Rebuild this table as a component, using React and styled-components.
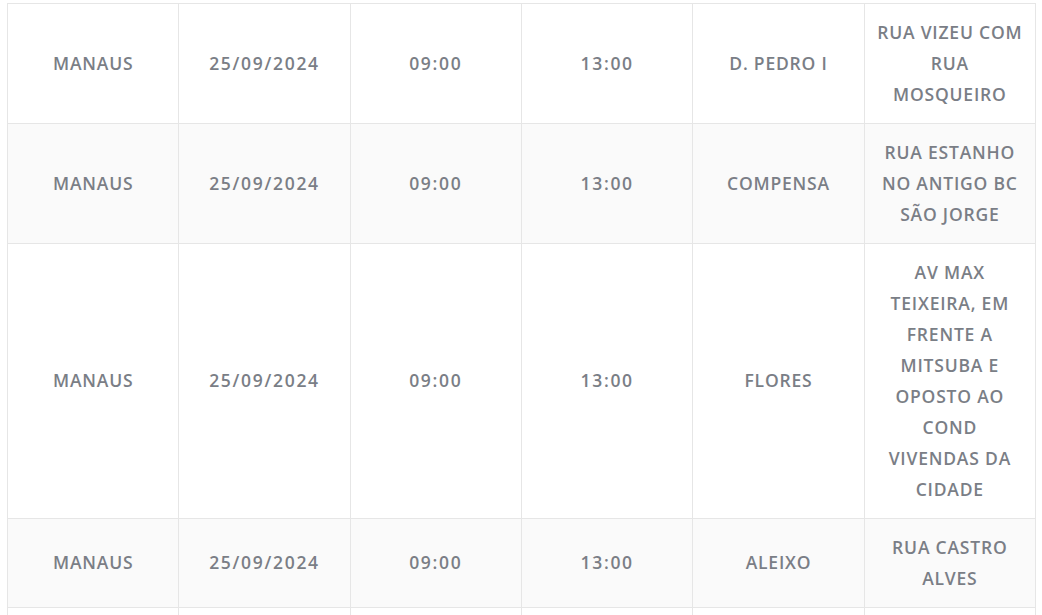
import styled, { createGlobalStyle } from "styled-components";

const GlobalStyle = createGlobalStyle`
  html, body {
    margin: 0;
    padding: 0;
    background: #fff;
  }
`;

const rows = [
  ["MANAUS", "25/09/2024", "09:00", "13:00", "D. PEDRO I", "RUA VIZEU COM RUA MOSQUEIRO"],
  ["MANAUS", "25/09/2024", "09:00", "13:00", "COMPENSA", "RUA ESTANHO NO ANTIGO BC SÃO JORGE"],
  [
    "MANAUS",
    "25/09/2024",
    "09:00",
    "13:00",
    "FLORES",
    "AV MAX TEIXEIRA, EM FRENTE A MITSUBA E OPOSTO AO COND VIVENDAS DA CIDADE",
  ],
  ["MANAUS", "25/09/2024", "09:00", "13:00", "ALEIXO", "RUA CASTRO ALVES"],
  ["", "", "", "", "", ""],
];

const App = () => {
  return (
    <Page>
      <GlobalStyle />
      <Table>
        <tbody>
          {rows.map((row, i) => (
            <Row key={i} $striped={i % 2 === 1}>
              {row.map((cell, j) => (
                <Cell key={j} $empty={!cell} $numeric={j >= 1 && j <= 3}>
                  {cell || "\u00a0"}
                </Cell>
              ))}
            </Row>
          ))}
        </tbody>
      </Table>
    </Page>
  );
};

export default App;

const Page = styled.div`
  padding: 3px 0 0 7px;
  height: 615px;
  overflow: hidden;
  box-sizing: border-box;
`;

const Table = styled.table`
  width: 1029px;
  table-layout: fixed;
  border-collapse: collapse;
  font-family: "Open Sans", sans-serif;
`;

const Row = styled.tr`
  background: ${(p) => (p.$striped ? "#fafafa" : "#ffffff")};
`;

const Cell = styled.td`
  border: 1px solid #e6e6e6;
  padding: 12.8px 12px;
  height: ${(p) => (p.$empty ? "89px" : "auto")};
  text-align: center;
  vertical-align: middle;
  color: #7a7e86;
  font-size: 17.5px;
  font-weight: 600;
  letter-spacing: ${(p) => (p.$numeric ? "1.7px" : "0.8px")};
  line-height: 31.1px;
  word-wrap: break-word;
`;
